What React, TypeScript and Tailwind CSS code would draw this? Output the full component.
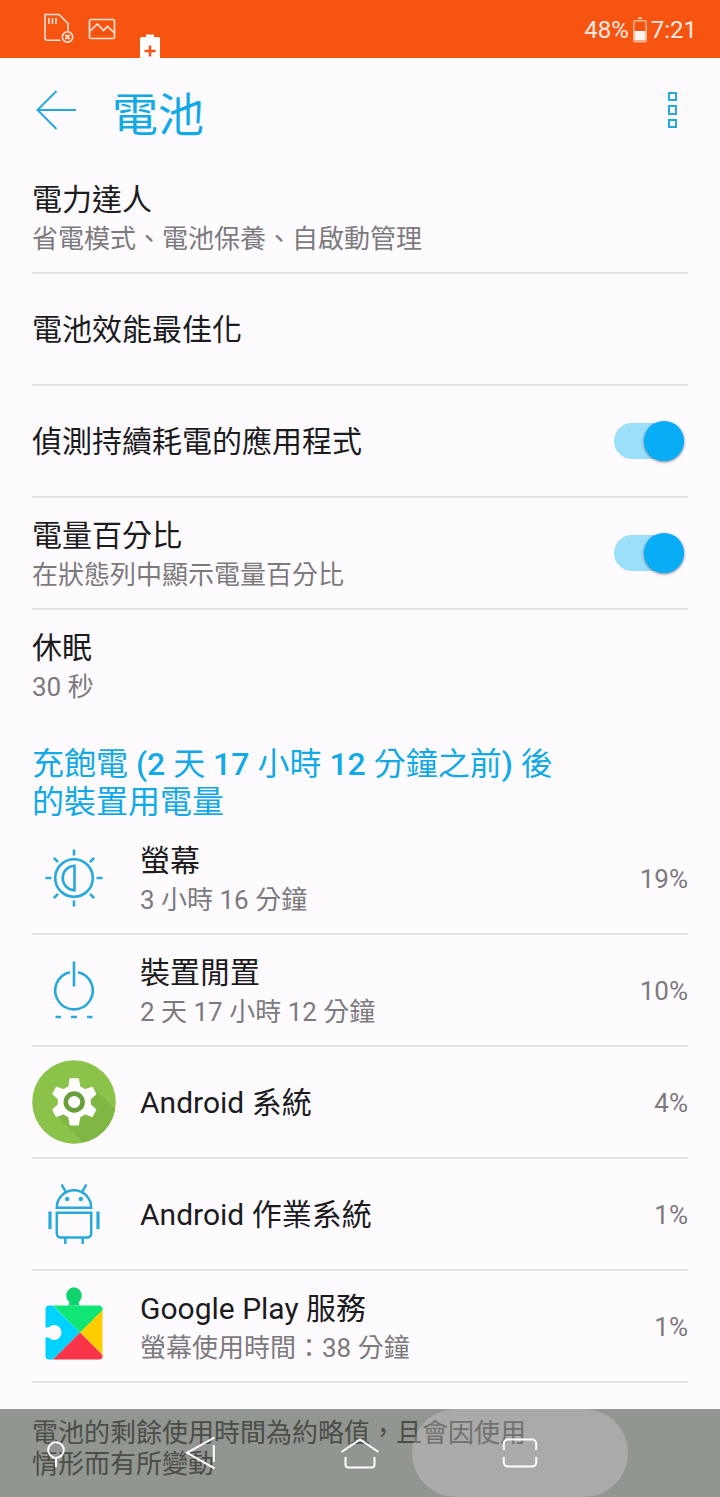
import type { ReactNode } from 'react';
import clsx from 'clsx';

interface SettingItem {
  title: string;
  summary?: string;
  toggle?: boolean;
}

interface UsageItem {
  title: string;
  summary?: string;
  percent: string;
  icon: ReactNode;
}

function SdCardIcon() {
  return (
    <svg width="32" height="32" viewBox="0 0 32 32" fill="none" stroke="#ffe3d6" strokeWidth="1.6">
      <path d="M18.500 27.300H5.500a2.500 2.500 0 0 1-2.500-2.500V1.500h14l9 9v7" />
      <path d="M7 5v6M10.500 5v6M14 5v6" />
      <circle cx="25.500" cy="24" r="5.200" />
      <path d="M23.400 21.900l4.200 4.200M27.600 21.900l-4.200 4.200" strokeWidth="2" />
    </svg>
  );
}

function PictureIcon() {
  return (
    <svg width="28" height="22" viewBox="0 0 28 22" fill="none" stroke="#ffe3d6" strokeWidth="1.7">
      <rect x="1.500" y="1.500" width="25" height="19" rx="1.500" />
      <path d="M2 13L9.500 6l6 6.500 4-4 7 6.500" />
    </svg>
  );
}

function BatteryPlusIcon() {
  return (
    <svg width="20" height="24" viewBox="0 0 20 24">
      <path d="M0 4.500A1.500 1.500 0 0 1 1.500 3H6V.500h8V3h4.500A1.500 1.500 0 0 1 20 4.500V24H0z" fill="#fff" />
      <path d="M10 11.500v11M4.500 17h11" stroke="#f85411" strokeWidth="2.500" />
    </svg>
  );
}

function BatteryIcon() {
  return (
    <svg width="16" height="26" viewBox="0 0 16 26">
      <path d="M6 1.200h4" stroke="#ffd9c9" strokeWidth="1.600" />
      <rect x="1.800" y="3.700" width="12.400" height="21" rx="1.200" fill="none" stroke="#ffb597" strokeWidth="1.500" />
      <path d="M2.500 14h11v9.500h-11z" fill="#fff3ee" />
    </svg>
  );
}

function ScreenIcon() {
  return (
    <svg width="60" height="60" viewBox="0 0 60 60" fill="none" stroke="#27a9dc" strokeWidth="2.600">
      <circle cx="30" cy="30" r="18.800" />
      <path d="M30.500 16.500v27M30 17.700a12.400 12.400 0 0 0 0 24.700" />
      <path d="M30 1.500v6M30 52.500v6M1.500 30h6M52.500 30h6M9.800 9.800l4.200 4.200M46 46l4.200 4.200M50.200 9.800L46 14M14 46l-4.200 4.200" />
    </svg>
  );
}

function IdleIcon() {
  return (
    <svg width="60" height="60" viewBox="0 0 60 60" fill="none" stroke="#27a9dc" strokeWidth="2.600">
      <path d="M26 12.200a18.800 18.800 0 1 0 8 0" />
      <path d="M30 1.500V26.500" />
      <path d="M11.500 57h5.500M27 57h6M43 57h5.500" />
    </svg>
  );
}

function AndroidSystemIcon() {
  return (
    <svg width="84" height="84" viewBox="0 0 84 84">
      <clipPath id="disc">
        <circle cx="42" cy="42" r="41.800" />
      </clipPath>
      <g clipPath="url(#disc)">
        <path d="M0 0h84v84H0z" fill="#8bc34a" />
        <path d="M24 55L54 85h30V50L64 30z" fill="#7fb644" />
      </g>
      <g transform="translate(42.300 42) scale(.89 .94) translate(-41.500 -42.500)">
        <path
          d="M37 18h9l1.500 8.300 6 3.400 8-2.800 4 7-6.300 5.300v6l6.300 5.500-4 7-8-2.800-6 3.400-1.500 8.500h-9l-1.500-8.500-6-3.400-8 2.800-4-7 6.300-5.500v-6l-6.300-5.300 4-7 8 2.800 6-3.400z"
          fill="#fff"
          stroke="#fff"
          strokeWidth="1.500"
          strokeLinejoin="round"
        />
      </g>
      <circle cx="42.200" cy="42" r="8.400" fill="#fff" stroke="#689f38" strokeWidth="4.600" />
    </svg>
  );
}

function AndroidIcon() {
  return (
    <svg width="60" height="64" viewBox="0 0 60 64" fill="none" stroke="#27a9dc" strokeWidth="2.500">
      <path d="M12.800 25.700a17.200 17.500 0 0 1 34.400 0z" />
      <path d="M21.700 9.700L17.600 2.500M38.300 9.700l4.100-7.200" />
      <path d="M12.800 30.700h34.400v20.800a4 4 0 0 1-4 4H16.800a4 4 0 0 1-4-4z" />
      <path d="M21.300 55.500V62M38.700 55.500V62" />
      <path d="M6 29.500v17.500M54 29.500v17.500" strokeWidth="3.200" />
      <circle cx="23.200" cy="17" r="2.200" fill="#27a9dc" stroke="none" />
      <circle cx="36.800" cy="17" r="2.200" fill="#27a9dc" stroke="none" />
    </svg>
  );
}

function PlayServicesIcon() {
  return (
    <svg className="mb-1.5" width="58" height="74" viewBox="0 0 58 74">
      <clipPath id="puzzle">
        <path d="M4 19.500h50a3.500 3.500 0 0 1 3.500 3.500v47a3.500 3.500 0 0 1-3.500 3.500H4A3.500 3.500 0 0 1 .500 70V51.500h3a7.500 7.500 0 1 0 0-10h-3V23A3.500 3.500 0 0 1 4 19.500z" />
      </clipPath>
      <g clipPath="url(#puzzle)">
        <path d="M0 12l35 34.500L7.500 74H0z" fill="#00d2ff" />
        <path d="M8 0h50v24.500L35 46.500 8 19.500z" fill="#0fe676" />
        <path d="M58 23.500v46L35 46.500z" fill="#ffcd00" />
        <path d="M35 46.500L58 69.500V74H7.500z" fill="#fb3549" />
      </g>
      <path d="M23 19.500c1.200-1 1.500-2.200 1-3.500a7.800 8.300 0 1 1 10 0c-.5 1.300-.2 2.500 1 3.500z" fill="#10d36e" />
    </svg>
  );
}

const settings: SettingItem[] = [
  { title: '電力達人', summary: '省電模式、電池保養、自啟動管理' },
  { title: '電池效能最佳化' },
  { title: '偵測持續耗電的應用程式', toggle: true },
  { title: '電量百分比', summary: '在狀態列中顯示電量百分比', toggle: true },
  { title: '休眠', summary: '30 秒' },
];

const usage: UsageItem[] = [
  { title: '螢幕', summary: '3 小時 16 分鐘', percent: '19%', icon: <ScreenIcon /> },
  { title: '裝置閒置', summary: '2 天 17 小時 12 分鐘', percent: '10%', icon: <IdleIcon /> },
  { title: 'Android 系統', percent: '4%', icon: <AndroidSystemIcon /> },
  { title: 'Android 作業系統', percent: '1%', icon: <AndroidIcon /> },
  { title: 'Google Play 服務', summary: '螢幕使用時間：38 分鐘', percent: '1%', icon: <PlayServicesIcon /> },
];

function Toggle() {
  return (
    <button role="switch" aria-checked="true" className="mr-1 flex h-9 w-[70px] items-center justify-end rounded-full bg-[#9cdff9]">
      <span className="size-10 shrink-0 rounded-full bg-[#08adf6] shadow-[0_1px_3px_rgba(0,50,80,0.6)]" />
    </button>
  );
}

function RowText({ title, summary }: { title: string; summary?: string }) {
  return (
    <div className={clsx('flex-1', summary ? 'pt-1' : 'pt-px')}>
      <div className="text-[30px] leading-10 text-[#1c1b1d]">{title}</div>
      {summary && <div className="text-[26px] leading-[38px] text-[#7c7a7d]">{summary}</div>}
    </div>
  );
}

function StatusBar() {
  return (
    <div className="flex h-[58px] items-center bg-[#f85411] pl-[42px] pr-[23px] text-[#ffebe3]">
      <SdCardIcon />
      <div className="ml-3.5">
        <PictureIcon />
      </div>
      <div className="ml-6 self-end">
        <BatteryPlusIcon />
      </div>
      <div className="ml-auto flex items-center gap-[3px] pt-0.5 text-2xl">
        <span>48%</span>
        <BatteryIcon />
        <span>7:21</span>
      </div>
    </div>
  );
}

function Header() {
  return (
    <header className="flex h-26 items-center pl-9 pr-[43px]">
      <svg width="41" height="40" viewBox="0 0 41 40" fill="none" stroke="#27a9dc" strokeWidth="2">
        <path d="M20.500 1L1.500 20l19 19M1.500 20H40" />
      </svg>
      <h1 className="ml-[35px] pt-2.5 text-[46px] leading-none text-[#12aae6]">電池</h1>
      <div className="ml-auto flex flex-col gap-1">
        {[0, 1, 2].map(i => (
          <span key={i} className="size-[9.500px] border-2 border-[#27a9dc]" />
        ))}
      </div>
    </header>
  );
}

function NavBar() {
  return (
    <nav className="absolute inset-x-0 bottom-0 h-[88px] bg-[#1a2413]/47">
      <div className="absolute left-[412px] h-full w-[216px] rounded-full bg-[#fff0ff]/22" />
      <svg className="relative" width="720" height="88" viewBox="0 0 720 88" fill="none" stroke="#fff" strokeWidth="2">
        <circle cx="56" cy="41" r="7.800" />
        <path d="M56 49v9" />
        <path d="M214.500 28.500L187 43.800l27.500 15.500M213.800 36v17" />
        <path d="M341.500 43L360 30.500l18.500 12.500M345.500 48v7.500a3 3 0 0 0 3 3h23a3 3 0 0 0 3-3V48" />
        <path d="M503.800 41v-6.500a4 4 0 0 1 4-4h24.400a4 4 0 0 1 4 4V41M503.800 48v5.500a4 4 0 0 0 4 4h24.400a4 4 0 0 0 4-4V48" />
      </svg>
    </nav>
  );
}

export default function App() {
  return (
    <div
      lang="zh-Hant"
      className="relative flex h-[1497px] w-[720px] flex-col overflow-hidden bg-[#fefbff] font-['Roboto','Noto_Sans_CJK_TC',sans-serif]"
    >
      <StatusBar />
      <Header />
      <main className="px-8">
        {settings.map((item, i) => (
          <div
            key={item.title}
            className={clsx(
              'flex h-28 items-center border-b-2',
              i < settings.length - 1 ? 'border-[#e5e2e6]' : 'border-transparent'
            )}
          >
            <RowText title={item.title} summary={item.summary} />
            {item.toggle && <Toggle />}
          </div>
        ))}

        <h2 className="mt-[23px] mb-0.5 text-[32px] leading-[38px] text-[#12aae6]">
          充飽電 <span className="font-medium">(2</span> 天 <span className="font-medium">17</span> 小時{' '}
          <span className="font-medium">12</span> 分鐘之前<span className="font-medium">)</span> 後
          <br />
          的裝置用電量
        </h2>

        {usage.map(item => (
          <div key={item.title} className="flex h-28 items-center border-b-2 border-[#e5e2e6]">
            <div className="mr-6 flex w-[84px] justify-center">{item.icon}</div>
            <RowText title={item.title} summary={item.summary} />
            <span className="pt-0.5 text-[26px] text-[#7c7a7d]">{item.percent}</span>
          </div>
        ))}

        <p className="mt-[35px] text-[26px] leading-[31px] text-[#77727a]">
          電池的剩餘使用時間為約略值，且會因使用
          <br />
          情形而有所變動
        </p>
      </main>
      <NavBar />
    </div>
  );
}
